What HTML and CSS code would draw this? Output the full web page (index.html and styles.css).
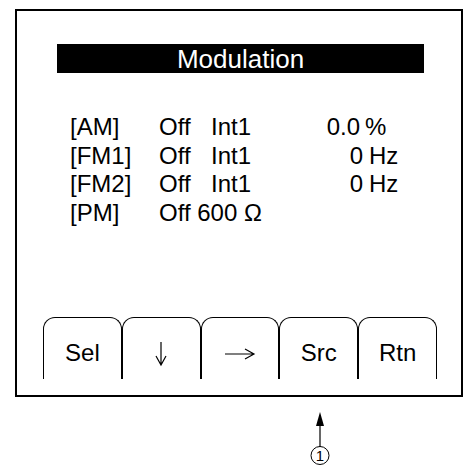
FILE: index.html
```html
<!DOCTYPE html>
<html lang="en">
<head>
    <meta charset="UTF-8">
    <title>Modulation</title>
    <link rel="stylesheet" href="styles.css">
</head>
<body>
    <div class="screen">
        <div class="title">Modulation</div>

        <div class="rows">
            <span>[AM]</span><span>Off</span><span>Int1</span><span class="num">0.0</span><span class="unit">%</span>
            <span>[FM1]</span><span>Off</span><span>Int1</span><span class="num hz">0</span><span class="unit hz-unit">Hz</span>
            <span>[FM2]</span><span>Off</span><span>Int1</span><span class="num hz">0</span><span class="unit hz-unit">Hz</span>
            <span>[PM]</span><span class="wide">Off 600 &Omega;</span>
        </div>

        <div class="tabs">
            <div class="tab">Sel</div>
            <div class="tab">
                <svg class="arrow" width="14" height="26" viewBox="0 0 14 26">
                    <path d="M7 1 V24 M2 15 L7 24 L12 15" fill="none" stroke="#000" stroke-width="1.2"/>
                </svg>
            </div>
            <div class="tab">
                <svg class="arrow" width="32" height="14" viewBox="0 0 32 14">
                    <path d="M1 7 H30 M21 2 L30 7 L21 12" fill="none" stroke="#000" stroke-width="1.2"/>
                </svg>
            </div>
            <div class="tab">Src</div>
            <div class="tab">Rtn</div>
        </div>
    </div>

    <svg class="callout" width="463" height="76" viewBox="0 0 463 76">
        <!-- pointer to the Src key -->
        <line x1="320" y1="26" x2="320" y2="50" stroke="#000" stroke-width="1.2"/>
        <polygon points="320,15 316,29 324,29" fill="#000"/>
        <circle cx="320" cy="58.5" r="9" fill="none" stroke="#000" stroke-width="1"/>
        <text x="320" y="64" text-anchor="middle" class="num-label">1</text>
    </svg>
</body>
</html>
```

FILE: styles.css
```css
body {
    margin: 0;
    background-color: #fff;
    font-family: "Liberation Sans", Arial, sans-serif;
    color: #000;
}
.screen {
    box-sizing: border-box;
    width: 448px;
    height: 388px;
    margin: 9px 0 0 15px;
    border: 2px solid #000;
    display: flex;
    flex-direction: column;
}
.title {
    width: 367px;
    height: 29px;
    margin: 33px 0 0 40px;
    background-color: #000;
    color: #fff;
    font-size: 26px;
    line-height: 30px;
    text-align: center;
}
.rows {
    display: grid;
    grid-template-columns: 89px 52px 60px 89px auto;
    margin: 40px 0 0 53px;
    font-size: 24px;
    line-height: 28.5px;
}
.rows .num {
    text-align: right;
}
.rows .hz {
    margin-right: -3px;
}
.rows .unit {
    padding-left: 5px;
}
.rows .hz-unit {
    padding-left: 9px;
}
.rows .wide {
    grid-column: 2 / 6;
}
.tabs {
    display: flex;
    margin: auto 0 16px 26px;
}
.tab {
    box-sizing: border-box;
    width: 78.8px;
    height: 62px;
    border: 1px solid #000;
    border-bottom: none;
    border-radius: 12px 12px 0 0;
    font-size: 24px;
    line-height: 28px;
    text-align: center;
    padding-top: 21px;
}
.arrow {
    display: block;
    margin: 0 auto;
}
.tab:nth-child(2) .arrow {
    margin-top: 2px;
}
.tab:nth-child(3) .arrow {
    margin-top: 8px;
}
.callout {
    display: block;
}
.num-label {
    font-family: "Liberation Sans", Arial, sans-serif;
    font-size: 15px;
}
```
